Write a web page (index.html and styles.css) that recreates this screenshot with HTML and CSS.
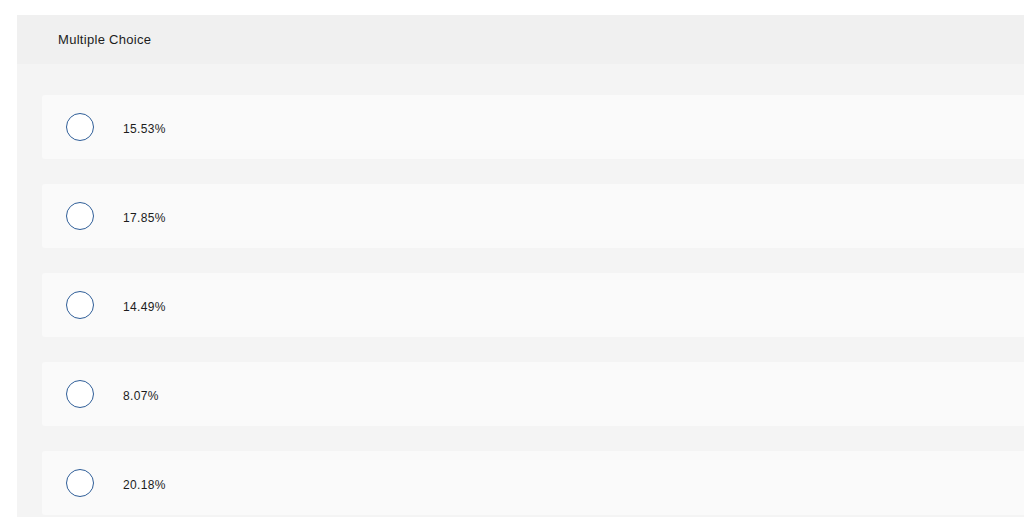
FILE: index.html
```html
<!DOCTYPE html>
<html>
<head>
<meta charset="utf-8">
<link rel="stylesheet" href="styles.css">
</head>
<body>
<div class="panel">
  <div class="header">Multiple Choice</div>
  <div class="options">
    <div class="option"><span class="radio"></span><span class="label">15.53%</span></div>
    <div class="option"><span class="radio"></span><span class="label">17.85%</span></div>
    <div class="option"><span class="radio"></span><span class="label">14.49%</span></div>
    <div class="option"><span class="radio"></span><span class="label">8.07%</span></div>
    <div class="option"><span class="radio"></span><span class="label">20.18%</span></div>
  </div>
</div>
</body>
</html>
```
FILE: styles.css
```css
html, body {
  margin: 0;
  padding: 0;
  background: #ffffff;
  overflow: hidden;
}
body {
  padding: 15px 0 0 17px;
  font-family: "Liberation Sans", Arial, sans-serif;
  color: #1c1c1c;
}
.panel {
  background: #f4f4f4;
}
.header {
  height: 49px;
  background: #f0f0f0;
  display: flex;
  align-items: center;
  padding-left: 41px;
  font-size: 13px;
  letter-spacing: 0.3px;
}
.options {
  display: flex;
  flex-direction: column;
  gap: 25px;
  padding: 31px 0 10px 25px;
}
.option {
  height: 64px;
  background: #fafafa;
  border-radius: 3px 0 0 3px;
  display: flex;
  align-items: center;
  padding-left: 24px;
}
.radio {
  width: 26px;
  height: 26px;
  border: 1px solid #2f5e98;
  border-radius: 50%;
  background: #ffffff;
  flex: none;
}
.label {
  margin-left: 29px;
  padding-top: 4px;
  font-size: 12px;
  letter-spacing: 0.35px;
}
```
